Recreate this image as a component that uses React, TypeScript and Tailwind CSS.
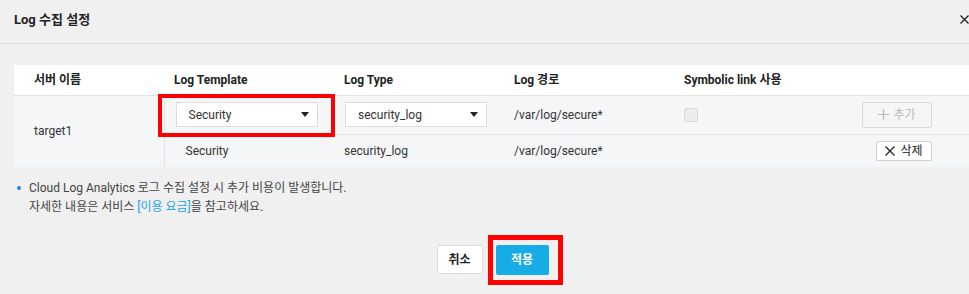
import React from 'react';

const Caret: React.FC = () => (
  <svg width="8" height="5" viewBox="0 0 8 5" className="shrink-0">
    <path d="M0 0 L8 0 L4 5 Z" fill="#222" />
  </svg>
);

const Select: React.FC<{ value: string }> = ({ value }) => (
  <div className="flex items-center justify-between w-[142px] h-[25px] bg-white border border-[#dcdcdc] pl-[12px] pr-[8px] text-[12px] text-[#333]">
    <span>{value}</span>
    <Caret />
  </div>
);

const App: React.FC = () => {
  return (
    <div
      className="w-[969px] h-[294px] overflow-hidden bg-[#f0f0f0] text-[#333]"
      style={{ fontFamily: "Roboto, 'Noto Sans CJK KR', sans-serif" }}
    >
      <div className="w-[985px]">
        {/* header */}
        <div className="flex items-center justify-between h-[44px] pb-[4px] pl-[14px] pr-[16px] border-b border-[#dedede]">
          <h1 className="text-[13px] font-bold text-[#222]">Log 수집 설정</h1>
          <svg width="9" height="9" viewBox="0 0 9 9">
            <path d="M0.5 0.5 L8.5 8.5 M8.5 0.5 L0.5 8.5" stroke="#222" strokeWidth="1.3" />
          </svg>
        </div>

        <div className="px-[14px] pt-[21px]">
          {/* table */}
          <table className="w-[957px] table-fixed border-collapse text-[12px]">
            <colgroup>
              <col className="w-[150px]" />
              <col className="w-[170px]" />
              <col className="w-[170px]" />
              <col className="w-[170px]" />
              <col className="w-[168px]" />
              <col />
            </colgroup>
            <thead>
              <tr className="h-[30px] bg-white border-b border-[#e2e2e2] text-left text-[#222]">
                <th className="pl-[20px] font-bold">서버 이름</th>
                <th className="pl-[10px] font-bold">Log Template</th>
                <th className="pl-[10px] font-bold">Log Type</th>
                <th className="pl-[10px] font-bold">Log 경로</th>
                <th className="pl-[10px] font-bold">Symbolic link 사용</th>
                <th />
              </tr>
            </thead>
            <tbody className="bg-[#f5f6f8]">
              <tr className="h-[39px] border-b border-[#e2e2e2]">
                <td rowSpan={2} className="pl-[20px] border-r border-[#e2e2e2] text-[#333]">
                  target1
                </td>
                <td className="pl-[11px]">
                  <div className="relative w-[142px]">
                    <Select value="Security" />
                    <div className="absolute -left-[18px] -right-[17px] -top-[8px] -bottom-[10px] border-4 border-[#ff0000]" />
                  </div>
                </td>
                <td className="pl-[11px]">
                  <Select value="security_log" />
                </td>
                <td className="pl-[10px]">/var/log/secure*</td>
                <td className="pl-[10px]">
                  <div className="w-[14px] h-[14px] rounded-[2px] bg-[#ececec] border border-[#dadada]" />
                </td>
                <td className="pr-[39px]">
                  <div className="ml-auto flex items-center justify-center gap-[4px] w-[70px] h-[26px] border border-[#d8dbe0] rounded-[2px] text-[12px] text-[#bbbbbb]">
                    <svg width="11" height="11" viewBox="0 0 11 11">
                      <path d="M5.5 0 V11 M0 5.5 H11" stroke="#bbbbbb" strokeWidth="1.2" />
                    </svg>
                    <span>추가</span>
                  </div>
                </td>
              </tr>
              <tr className="h-[33px]">
                <td className="pl-[21px]">Security</td>
                <td className="pl-[10px]">security_log</td>
                <td className="pl-[10px]">/var/log/secure*</td>
                <td />
                <td className="pr-[39px]">
                  <div className="ml-auto flex items-center justify-center gap-[5px] w-[56px] h-[20px] bg-white border border-[#d0d0d0] rounded-[2px] text-[12px] text-[#222]">
                    <svg width="10" height="10" viewBox="0 0 10 10">
                      <path d="M0.5 0.5 L9.5 9.5 M9.5 0.5 L0.5 9.5" stroke="#222" strokeWidth="1.3" />
                    </svg>
                    <span>삭제</span>
                  </div>
                </td>
              </tr>
            </tbody>
          </table>

          {/* note */}
          <div className="flex mt-[12px] text-[12px] leading-[19px] text-[#444]">
            <span className="w-[4px] h-[4px] mt-[7px] ml-[3px] mr-[8px] rounded-full bg-[#1a88e0] shrink-0" />
            <div>
              <p>Cloud Log Analytics 로그 수집 설정 시 추가 비용이 발생합니다.</p>
              <p>
                자세한 내용은 서비스 <span className="text-[#1aa3e8]">[이용 요금]</span>을 참고하세요.
              </p>
            </div>
          </div>

          {/* buttons */}
          <div className="flex justify-center gap-[13px] mt-[28px]">
            <button className="w-[46px] h-[29px] bg-white border border-[#dcdcdc] rounded-[2px] text-[12px] font-bold text-[#222]">
              취소
            </button>
            <div className="relative">
              <button className="w-[53px] h-[30px] bg-[#17ace6] rounded-[2px] text-[12px] font-bold text-white">
                적용
              </button>
              <div className="absolute -left-[8px] -right-[14px] -top-[10px] -bottom-[10px] border-[5px] border-[#ff0000]" />
            </div>
          </div>
        </div>
      </div>
    </div>
  );
};

export default App;
